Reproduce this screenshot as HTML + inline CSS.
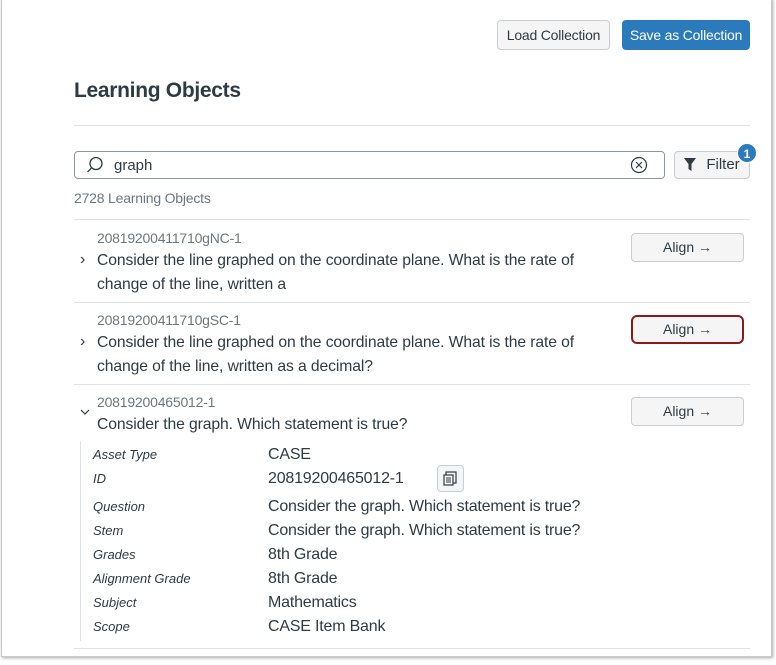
<!DOCTYPE html>
<html><head><style>
body{margin:0;width:776px;height:665px;background:#fff;font-family:"Liberation Sans",sans-serif;color:#2d3b45;position:relative;overflow:hidden}
.frame{position:absolute;left:1px;top:-2px;width:769px;height:657px;border:1px solid #c8c8c8;box-shadow:1px 1px 3px rgba(0,0,0,.35)}
.a{position:absolute;white-space:nowrap}
.btn{position:absolute;background:#f5f5f5;border:1px solid #c7cdd1;border-radius:4px;box-sizing:border-box;text-align:center;font-size:14px;color:#2d3b45}
.hr{position:absolute;left:74px;width:676px;height:1px;background:#dfe2e4}
.id{font-size:14px;color:#6b7780;letter-spacing:-0.2px}
.q{font-size:15.7px;line-height:24px;letter-spacing:-0.1px}
.lab{font-size:13px;font-style:italic}
.val{font-size:16px;letter-spacing:-0.2px}
</style></head><body>
<div class="frame"></div>
<div class="btn" style="left:497px;top:20px;width:113px;height:30px;line-height:28px;letter-spacing:-0.2px">Load Collection</div>
<div class="btn" style="left:622px;top:20px;width:128px;height:30px;line-height:28px;background:#2b7abc;border-color:#2b7abc;color:#fff;letter-spacing:-0.2px">Save as Collection</div>
<div class="a" style="left:74px;top:79px;font-size:21px;font-weight:bold;letter-spacing:-0.3px">Learning Objects</div>
<div class="hr" style="top:125px"></div>
<div style="position:absolute;left:74px;top:151px;width:591px;height:28px;border:1px solid #8b969e;border-radius:4px;box-sizing:border-box"></div>
<svg class="a" style="left:86px;top:156px" width="18" height="18" viewBox="0 0 18 18"><circle cx="10" cy="7.5" r="6" fill="none" stroke="#2d3b45" stroke-width="1.3"/><path d="M5.7 11.8L1.5 16" stroke="#2d3b45" stroke-width="1.3"/></svg>
<div class="a" style="left:114px;top:157px;font-size:15px">graph</div>
<svg class="a" style="left:630px;top:156px" width="18" height="18" viewBox="0 0 18 18"><circle cx="9" cy="9" r="7.5" fill="none" stroke="#2d3b45" stroke-width="1.2"/><path d="M6 6L12 12M12 6L6 12" stroke="#2d3b45" stroke-width="1.2"/></svg>
<div class="btn" style="left:674px;top:151px;width:76px;height:28px;line-height:26px;padding-left:22px;font-size:15px">Filter</div>
<svg class="a" style="left:683px;top:157px" width="14" height="15" viewBox="0 0 14 15"><path d="M1 1H13L8.5 7V14L5.5 12V7Z" fill="#2d3b45"/></svg>
<div class="a" style="left:737px;top:143px;width:20px;height:20px;border-radius:50%;background:#2b7abc;color:#fff;font-size:12px;text-align:center;line-height:20px;font-weight:bold;border:1px solid #fff;box-sizing:border-box">1</div>
<div class="a" style="left:74px;top:190px;font-size:14px;color:#6b7780;letter-spacing:-0.2px">2728 Learning Objects</div>
<div class="hr" style="top:219px"></div>
<div class="a id" style="left:97px;top:230px">20819200411710gNC-1</div>
<div class="a q" style="left:97px;top:249px">Consider the line graphed on the coordinate plane. What is the rate of<br>change of the line, written a</div>
<div class="a" style="left:80px;top:251px;font-size:16px">›</div>
<div class="btn" style="left:631px;top:233px;width:113px;height:29px;line-height:27px">Align →</div>
<div class="hr" style="top:302px"></div>
<div class="a id" style="left:97px;top:312px">20819200411710gSC-1</div>
<div class="a q" style="left:97px;top:331px">Consider the line graphed on the coordinate plane. What is the rate of<br>change of the line, written as a decimal?</div>
<div class="a" style="left:80px;top:333px;font-size:16px">›</div>
<div class="btn" style="left:631px;top:315px;width:113px;height:29px;line-height:25px;border:2px solid #8b1a1a;border-radius:6px">Align →</div>
<div class="hr" style="top:384px"></div>
<div class="a id" style="left:97px;top:394px">20819200465012-1</div>
<div class="a q" style="left:97px;top:413px">Consider the graph. Which statement is true?</div>
<svg class="a" style="left:80px;top:408px" width="10" height="8"><path d="M1 2L5 6L9 2" fill="none" stroke="#2d3b45" stroke-width="1.2"/></svg>
<div class="btn" style="left:631px;top:397px;width:113px;height:29px;line-height:27px">Align →</div>
<div style="position:absolute;left:80px;top:441px;width:1px;height:200px;background:#dfe2e4"></div>
<div class="a lab" style="left:93px;top:447px">Asset Type</div><div class="a val" style="left:268px;top:446px">CASE</div>
<div class="a lab" style="left:93px;top:471px">ID</div><div class="a val" style="left:268px;top:470px">20819200465012-1</div>
<div class="btn" style="left:437px;top:465px;width:27px;height:27px"></div>
<svg class="a" style="left:443px;top:471px" width="15" height="15"><rect x="3" y="1" width="10" height="11" fill="none" stroke="#2d3b45" stroke-width="1.2"/><rect x="1" y="4" width="9" height="10" fill="#f5f5f5" stroke="#2d3b45" stroke-width="1.2"/><path d="M3 7H8M3 9H8M3 11H8" stroke="#2d3b45"/></svg>
<div class="a lab" style="left:93px;top:499px">Question</div><div class="a val" style="left:268px;top:498px">Consider the graph. Which statement is true?</div>
<div class="a lab" style="left:93px;top:523px">Stem</div><div class="a val" style="left:268px;top:522px">Consider the graph. Which statement is true?</div>
<div class="a lab" style="left:93px;top:547px">Grades</div><div class="a val" style="left:268px;top:546px">8th Grade</div>
<div class="a lab" style="left:93px;top:571px">Alignment Grade</div><div class="a val" style="left:268px;top:570px">8th Grade</div>
<div class="a lab" style="left:93px;top:595px">Subject</div><div class="a val" style="left:268px;top:594px">Mathematics</div>
<div class="a lab" style="left:93px;top:619px">Scope</div><div class="a val" style="left:268px;top:618px">CASE Item Bank</div>
<div class="hr" style="top:648px"></div>
</body></html>
